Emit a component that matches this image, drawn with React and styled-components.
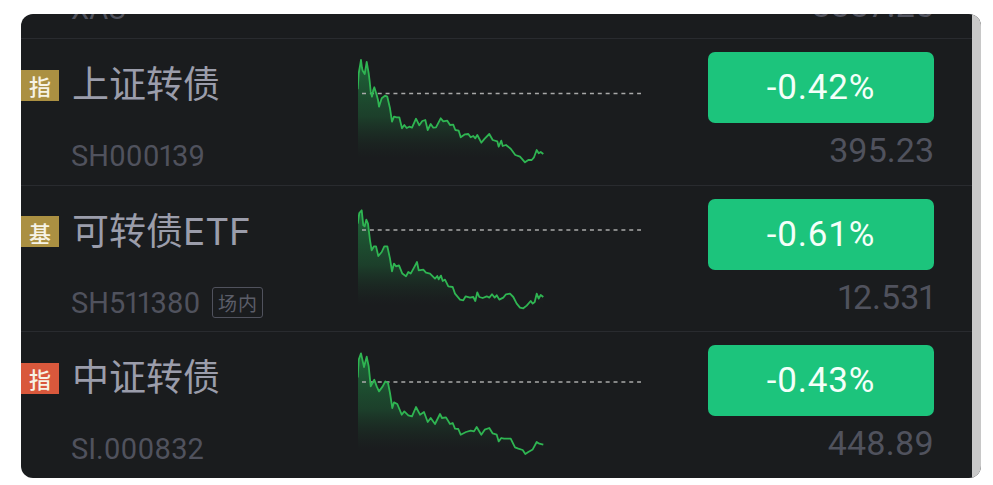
import styled, { createGlobalStyle } from 'styled-components';

const GlobalStyle = createGlobalStyle`
  html, body {
    margin: 0;
    background: #fff;
  }
  * {
    box-sizing: border-box;
  }
`;

// traced chart lines, coordinates are 3x, relative to the crop origin
const line1 = '53,148 56,100 60,78 63,60 66,84 68,92 74,102 77,84 80,66 86,100 89,125 92,155 96,170 100,150 103,142 110,165 114,180 117,200 125,175 135,167 142,170 150,205 156,245 162,230 170,232 178,232 186,265 193,255 200,264 208,260 216,263 228,236 238,256 247,243 256,240 263,270 272,252 280,263 288,262 302,235 310,244 322,242 330,255 340,254 346,270 356,272 362,292 375,283 385,282 392,292 400,288 406,295 412,285 424,308 434,296 448,282 458,300 472,304 476,320 484,302 488,318 498,315 512,326 526,345 540,350 555,367 565,360 575,360 582,352 590,330 596,340 602,336 610,342';
const line2 = '53,100 58,68 65,60 70,105 74,108 79,88 84,100 90,150 95,180 102,168 108,168 115,197 125,185 133,168 142,168 150,205 156,243 162,220 168,228 177,225 187,250 198,258 205,245 212,250 222,232 231,215 236,240 250,238 258,247 270,250 285,265 292,257 296,267 303,256 308,272 315,268 325,288 338,290 345,310 360,328 370,330 377,318 390,322 400,320 406,332 412,306 418,320 428,323 440,318 448,322 456,312 464,322 470,315 478,328 490,322 498,312 510,310 520,320 530,340 540,352 550,354 560,346 572,332 578,340 584,335 590,310 596,325 602,314 610,320';
const line3 = '53,128 56,75 63,56 72,97 80,66 86,95 92,155 103,135 110,155 117,170 128,155 136,140 144,145 150,175 157,220 162,203 172,208 185,240 193,230 205,242 216,245 228,217 240,240 252,232 263,262 272,250 285,268 300,238 306,250 318,248 330,268 338,265 345,282 355,283 362,300 378,292 392,288 402,290 410,277 424,300 434,285 448,280 458,296 470,300 476,320 484,310 492,312 512,312 525,338 535,342 548,346 556,358 565,352 578,344 590,322 598,327 610,330';

const ROW_H = 440 / 3;

const rows = [
  {
    badge: '指', tone: '#ab9042', name: '上证转债', code: 'SH000139',
    change: '-0.42%', price: '395.23',
    chart: { line: line1, shiftY: 1, dashY: 54.5 },
  },
  {
    badge: '基', tone: '#ab9042', name: '可转债ETF', code: 'SH511380', tag: '场内',
    change: '-0.61%', price: '12.531',
    chart: { line: line2, shiftY: 4.3, dashY: 44 },
  },
  {
    badge: '指', tone: '#d9583c', name: '中证转债', code: 'SI.000832',
    change: '-0.43%', price: '448.89',
    chart: { line: line3, shiftY: 2.7, dashY: 50 },
  },
];

const toPoints = (line, shiftY) =>
  line.split(' ').map((p) => {
    const [x, y] = p.split(',').map(Number);
    return [+(x / 3 - 18).toFixed(1), +(y / 3 + shiftY).toFixed(1)];
  });

const Sparkline = ({ id, line, shiftY, dashY }) => {
  const pts = toPoints(line, shiftY);
  const d = pts.map((p) => p.join(',')).join(' ');
  const first = pts[0][0];
  const last = pts[pts.length - 1][0];
  return (
    <ChartSvg viewBox="0 0 283 145" width="283" height="145">
      <defs>
        <linearGradient id={id} x1="0" y1="0" x2="0" y2="1">
          <stop offset="0" stopColor="#1f7a40" stopOpacity="0.8" />
          <stop offset="0.55" stopColor="#1f6a3a" stopOpacity="0.45" />
          <stop offset="0.95" stopColor="#1c3a28" stopOpacity="0" />
        </linearGradient>
      </defs>
      <polygon points={`${first},124 ${d} ${last},124`} fill={`url(#${id})`} />
      <line
        x1="4"
        x2="283"
        y1={dashY}
        y2={dashY}
        stroke="#a9a9a9"
        strokeWidth="1.5"
        strokeDasharray="4 3.86"
      />
      <polyline points={d} fill="none" stroke="#2fb552" strokeWidth="1.8" strokeLinejoin="round" />
    </ChartSvg>
  );
};

const App = () => (
  <>
    <GlobalStyle />
    <Card>
      <List>
        <Row>
          <Left>
            <NameLine />
            <CodeLine>
              <Code>XAU</Code>
            </CodeLine>
          </Left>
          <div />
          <Right>
            <PriceStub>3337.25</PriceStub>
          </Right>
        </Row>
        {rows.map((r, i) => (
          <Row key={r.code}>
            <Left>
              <NameLine>
                <Badge $tone={r.tone}>{r.badge}</Badge>
                <Name>{r.name}</Name>
              </NameLine>
              <CodeLine>
                <Code>{r.code}</Code>
                {r.tag && <Tag>{r.tag}</Tag>}
              </CodeLine>
            </Left>
            <Sparkline id={`fill${i}`} {...r.chart} />
            <Right>
              <Change>{r.change}</Change>
              <Price>{r.price}</Price>
            </Right>
          </Row>
        ))}
      </List>
      <Scrollbar />
    </Card>
  </>
);

const Card = styled.div`
  position: relative;
  width: 960px;
  height: 464px;
  margin: 14px 0 0 21px;
  background: #1a1c1e;
  border-radius: 12px;
  overflow: hidden;
`;

const List = styled.div`
  margin-top: -122.67px;
  border-bottom: 1px solid #2a2c30;
`;

const Row = styled.div`
  display: grid;
  grid-template-columns: 337px 283px 1fr;
  height: ${ROW_H}px;
  border-top: 1px solid #292b2f;
`;

const Left = styled.div`
  display: flex;
  flex-direction: column;
`;

const NameLine = styled.div`
  display: flex;
  align-items: center;
  gap: 13px;
  height: 38px;
  margin-top: 27px;
`;

const Badge = styled.span`
  display: flex;
  align-items: center;
  justify-content: center;
  width: 38px;
  height: 31px;
  background: ${(p) => p.$tone};
  color: #f6f3e6;
  font: 500 22px/1 'Noto Sans CJK SC', sans-serif;
`;

const Name = styled.span`
  color: #9b9dab;
  font: 400 37px/38px 'Inter', 'Noto Sans CJK SC', sans-serif;
  white-space: nowrap;
`;

const CodeLine = styled.div`
  display: flex;
  align-items: center;
  gap: 12px;
  margin: 34px 0 0 50px;
  height: 36px;
`;

const Code = styled.span`
  color: #50525d;
  font: 400 29px/36px 'Roboto', sans-serif;
  font-variant-numeric: proportional-nums;
`;

const Tag = styled.span`
  display: flex;
  align-items: center;
  justify-content: center;
  width: 51px;
  height: 31px;
  border: 1.5px solid #50525d;
  border-radius: 3px;
  color: #5c5e69;
  font: 400 19px/1 'Noto Sans CJK SC', sans-serif;
  letter-spacing: 1px;
`;

const ChartSvg = styled.svg`
  display: block;
`;

const Right = styled.div`
  display: flex;
  flex-direction: column;
  align-items: flex-end;
  padding: 13px 47px 0 0;
`;

const Change = styled.div`
  display: flex;
  align-items: center;
  justify-content: center;
  width: 226px;
  height: 71px;
  border-radius: 7px;
  background: #1cc47c;
  color: #f4fff9;
  font: 400 35px/1 'Roboto', sans-serif;
  letter-spacing: 0.8px;
`;

const Price = styled.div`
  margin-top: 7px;
  color: #50525d;
  font: 400 34px/40px 'Roboto', sans-serif;
  font-variant-numeric: proportional-nums;
`;

// leftover of the row scrolled past the top edge
const PriceStub = styled(Price)`
  margin-top: 80px;
`;

const Scrollbar = styled.div`
  position: absolute;
  top: 0;
  right: 0;
  bottom: 0;
  width: 9px;
  background: #c8c8c8;
`;

export default App;
